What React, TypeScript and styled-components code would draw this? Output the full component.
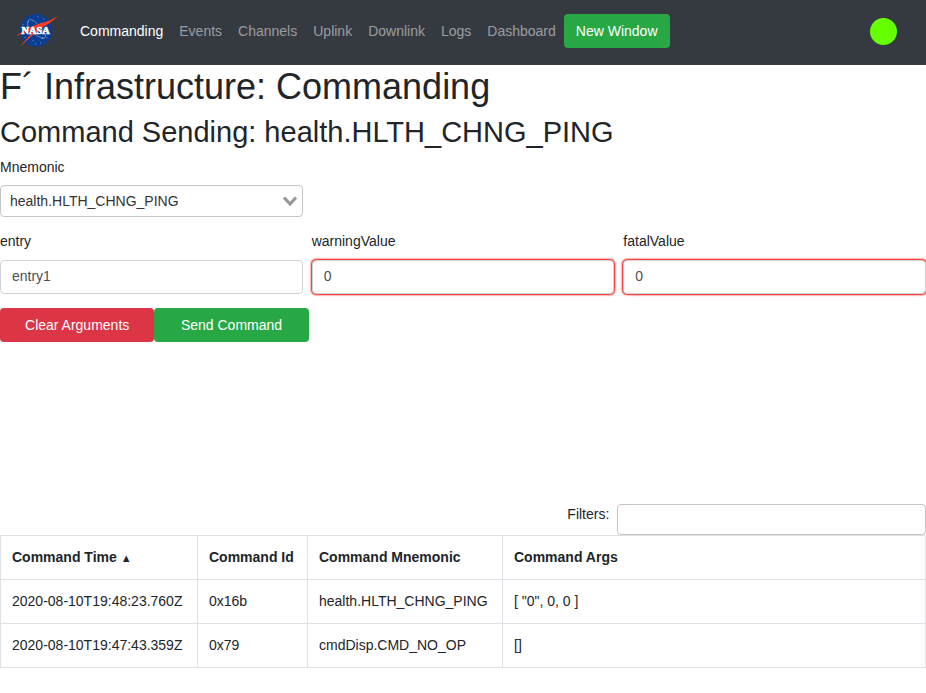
import React from "react";
import styled, { createGlobalStyle } from "styled-components";

const GlobalStyle = createGlobalStyle`
  *, *::before, *::after { box-sizing: border-box; }
  body {
    margin: 0;
    background: #fff;
    color: #212529;
    font: 14px/22px "Liberation Sans", Arial, sans-serif;
  }
`;

const NavBar = styled.nav`
  display: flex;
  align-items: center;
  height: 65px;
  padding: 0 29px 3px 14px;
  background: #343a40;
`;

const Brand = styled.a`
  display: flex;
  margin-right: 7px;
`;

const NavList = styled.ul`
  display: flex;
  flex: 1;
  align-items: center;
  margin: 0;
  padding: 0;
  list-style: none;
`;

const NavLink = styled.a<{ $active?: boolean }>`
  display: block;
  padding: 6px 8px;
  color: ${(p) => (p.$active ? "#fff" : "rgba(255, 255, 255, 0.5)")};
  text-decoration: none;
`;

const Button = styled.button<{ $tone: "success" | "danger" }>`
  height: 34px;
  padding: 0 12px;
  border: 0;
  border-radius: 4px;
  background: ${(p) => (p.$tone === "success" ? "#28a745" : "#dc3545")};
  color: #fff;
  font: inherit;
  cursor: pointer;
`;

const StatusLight = styled.span`
  width: 27px;
  height: 27px;
  border-radius: 50%;
  background: #66ff00;
`;

const CommandSection = styled.section`
  min-height: 439px;
`;

const Title = styled.h1`
  margin: 0 0 6px;
  font-size: 36px;
  font-weight: 400;
  line-height: 44px;
`;

const Subtitle = styled.h2`
  margin: 0 0 7px;
  font-size: 29px;
  font-weight: 400;
  line-height: 34px;
`;

const FieldGrid = styled.div`
  display: grid;
  grid-template-columns: repeat(3, minmax(0, 1fr));
  gap: 9px;
  margin-bottom: 13px;
`;

const Field = styled.div<{ $gap: number }>`
  display: flex;
  flex-direction: column;
  gap: ${(p) => p.$gap}px;
`;

const TextInput = styled.input<{ $invalid?: boolean }>`
  width: 100%;
  height: 34px;
  padding: 0 11px 2px;
  border: 1px solid #ced4da;
  border-radius: 4px;
  outline: 0;
  background: #fff;
  box-shadow: ${(p) => (p.$invalid ? "0 0 2px 1px #ff0000" : "none")};
  color: #495057;
  font: inherit;
`;

const SelectFrame = styled.div`
  display: grid;
  align-items: center;

  > * { grid-area: 1 / 1; }
`;

const Select = styled.select`
  width: 100%;
  height: 32px;
  padding: 0 30px 0 9px;
  border: 1px solid #c5c5c5;
  border-radius: 4px;
  appearance: none;
  background: #fff;
  color: #333;
  font: inherit;
`;

const Chevron = styled.svg`
  justify-self: end;
  margin-right: 5px;
  pointer-events: none;
`;

const ButtonRow = styled.div`
  display: grid;
  grid-template-columns: repeat(6, 1fr);
  padding-top: 1px;
`;

const FilterBar = styled.div`
  display: grid;
  grid-template-columns: 2fr 1fr;
`;

const FilterLabel = styled.label`
  padding-right: 8px;
  line-height: 21px;
  text-align: right;
`;

const FilterInput = styled.input`
  width: 100%;
  height: 31px;
  padding: 0 8px;
  border: 1px solid #c5c5c5;
  border-radius: 4px;
  font: inherit;
`;

const HistoryTable = styled.table`
  width: 100%;
  border-collapse: collapse;
`;

const Column = styled.col<{ $width?: number }>`
  width: ${(p) => (p.$width ? `${p.$width}px` : "auto")};
`;

const cell = `
  height: 44px;
  padding: 0 11px 2px;
  border: 1px solid #dee2e6;
  text-align: left;
  white-space: nowrap;
`;

const HeadCell = styled.th`${cell}`;
const DataCell = styled.td`${cell}`;

const SortMark = styled.span`
  font-size: 11px;
  line-height: 1;
`;

function NasaLogo() {
  return (
    <svg width="51" height="40" viewBox="0 3 153 120" role="img" aria-label="NASA">
      <circle cx="66" cy="61" r="49" fill="#0b3d91" />
      <g fill="#fff" opacity="0.6">
        <circle cx="43" cy="35" r="1.5" />
        <circle cx="57" cy="91" r="1.5" />
        <circle cx="72" cy="20" r="1.5" />
        <circle cx="80" cy="98" r="1.5" />
        <circle cx="89" cy="27" r="1.5" />
        <circle cx="86" cy="84" r="2" />
        <circle cx="99" cy="83" r="1.5" />
        <circle cx="33" cy="82" r="1.5" />
        <circle cx="27" cy="43" r="1.5" />
        <circle cx="65" cy="102" r="1.5" />
      </g>
      <path
        d="M42 49C37 28 49 23 64 36C82 50 103 78 91 84C82 88 65 75 53 64"
        fill="none"
        stroke="#c9d5ea"
        strokeWidth="2"
        opacity="0.75"
      />
      <path
        d="M130 17C119 35 97 46 69 55C48 62 29 69 9 78L11 75C33 60 56 46 81 39C102 34 116 29 130 17Z"
        fill="#fc3d21"
      />
      <path
        d="M105 39C79 55 45 82 21 109C39 80 66 56 94 39Z"
        fill="#fc3d21"
      />
      <text
        x="65"
        y="73"
        textAnchor="middle"
        fill="#fff"
        stroke="#fff"
        strokeWidth="2"
        fontFamily="'Liberation Serif', serif"
        fontWeight="700"
        fontSize="31"
      >
        NASA
      </text>
    </svg>
  );
}

const links = ["Commanding", "Events", "Channels", "Uplink", "Downlink", "Logs", "Dashboard"];

const args = [
  { name: "entry", value: "entry1", invalid: false },
  { name: "warningValue", value: "0", invalid: true },
  { name: "fatalValue", value: "0", invalid: true },
];

const history = [
  ["2020-08-10T19:48:23.760Z", "0x16b", "health.HLTH_CHNG_PING", '[ "0", 0, 0 ]'],
  ["2020-08-10T19:47:43.359Z", "0x79", "cmdDisp.CMD_NO_OP", "[]"],
];

export default function App() {
  return (
    <>
      <GlobalStyle />
      <NavBar>
        <Brand href="#">
          <NasaLogo />
        </Brand>
        <NavList>
          {links.map((name, i) => (
            <li key={name}>
              <NavLink href={`#${name}`} $active={i === 0}>{name}</NavLink>
            </li>
          ))}
          <li>
            <Button type="button" $tone="success">New Window</Button>
          </li>
        </NavList>
        <StatusLight />
      </NavBar>
      <main>
        <CommandSection>
          <Title>F´ Infrastructure: Commanding</Title>
          <Subtitle>Command Sending: health.HLTH_CHNG_PING</Subtitle>
          <FieldGrid>
            <Field $gap={7}>
              <label htmlFor="mnemonic">Mnemonic</label>
              <SelectFrame>
                <Select id="mnemonic" defaultValue="health.HLTH_CHNG_PING">
                  <option>health.HLTH_CHNG_PING</option>
                  <option>cmdDisp.CMD_NO_OP</option>
                </Select>
                <Chevron width="16" height="12" viewBox="0 0 16 12" aria-hidden="true">
                  <path d="M2 2.5L8 9L14 2.5" fill="none" stroke="#999" strokeWidth="3.2" />
                </Chevron>
              </SelectFrame>
            </Field>
          </FieldGrid>
          <FieldGrid>
            {args.map((arg) => (
              <Field key={arg.name} $gap={8}>
                <label htmlFor={arg.name}>{arg.name}</label>
                <TextInput id={arg.name} type="text" defaultValue={arg.value} $invalid={arg.invalid} />
              </Field>
            ))}
          </FieldGrid>
          <ButtonRow>
            <Button type="button" $tone="danger">Clear Arguments</Button>
            <Button type="button" $tone="success">Send Command</Button>
          </ButtonRow>
        </CommandSection>
        <FilterBar>
          <FilterLabel htmlFor="filters">Filters:</FilterLabel>
          <FilterInput id="filters" type="text" />
        </FilterBar>
        <HistoryTable>
          <colgroup>
            <Column $width={197} />
            <Column $width={110} />
            <Column $width={195} />
            <Column />
          </colgroup>
          <thead>
            <tr>
              <HeadCell scope="col">Command Time <SortMark>▲</SortMark></HeadCell>
              <HeadCell scope="col">Command Id</HeadCell>
              <HeadCell scope="col">Command Mnemonic</HeadCell>
              <HeadCell scope="col">Command Args</HeadCell>
            </tr>
          </thead>
          <tbody>
            {history.map((row) => (
              <tr key={row[0]}>
                {row.map((value) => (
                  <DataCell key={value}>{value}</DataCell>
                ))}
              </tr>
            ))}
          </tbody>
        </HistoryTable>
      </main>
    </>
  );
}
